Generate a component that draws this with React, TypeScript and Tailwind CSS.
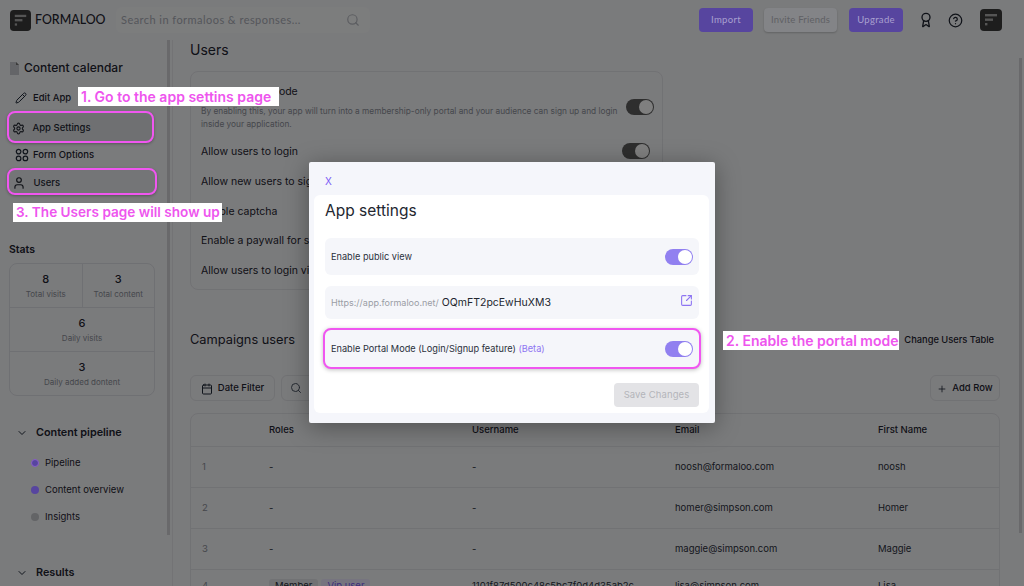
import React from "react";
import { Award, Calendar, ChevronDown, CircleHelp, Pencil, Plus, Search, Settings, SquareArrowOutUpRight, User } from "lucide-react";

function Logo({ size }: { size: number }) {
  return (
    <svg width={size} height={size} viewBox="0 0 22 22" className="shrink-0">
      <rect width="22" height="22" rx="4" fill="#3a3a3a" />
      <rect x="5" y="5" width="12" height="2.4" fill="#aaa" />
      <rect x="5" y="9.5" width="8" height="2.4" fill="#aaa" />
      <rect x="5" y="14" width="2.4" height="2.4" fill="#aaa" />
    </svg>
  );
}

function Toggle({ dark, className = "" }: { dark?: boolean; className?: string }) {
  return (
    <div className={`w-[28px] h-[16px] rounded-full flex items-center justify-end pr-[1px] shrink-0 ${dark ? "bg-[#5c5c5c]" : "bg-[#9180f0]"} ${className}`}>
      <div className="w-[14px] h-[14px] rounded-full bg-white" />
    </div>
  );
}

function FourDots() {
  return (
    <svg width="14" height="14" viewBox="0 0 14 14" fill="none" stroke="#1f2937" strokeWidth="1.2">
      <circle cx="3.6" cy="3.6" r="2.3" />
      <circle cx="10.4" cy="3.6" r="2.3" />
      <circle cx="3.6" cy="10.4" r="2.3" />
      <circle cx="10.4" cy="10.4" r="2.3" />
    </svg>
  );
}

function Stat({ value, label, right, grow }: { value: string; label: string; right?: boolean; grow?: boolean }) {
  return (
    <div className={`h-[43px] flex flex-col items-center justify-center gap-[3px] ${grow ? "flex-1" : ""} ${right ? "border-l border-[#dfe1e6]" : ""}`}>
      <div className="text-[11px] font-medium leading-[14px] text-[#1f2430]">{value}</div>
      <div className="text-[8px] leading-[10px] text-[#8b8f98]">{label}</div>
    </div>
  );
}

function SettingRow({ label, top, toggle, dark }: { label: string; top: string; toggle?: boolean; dark?: boolean }) {
  return (
    <div className={`flex items-center justify-between h-[16px] pr-[12px] ${top}`}>
      <span className="text-[10.5px] leading-[14px] pt-[2px] text-[#1f2430]">{label}</span>
      {toggle ? <Toggle dark={dark} /> : null}
    </div>
  );
}

const rows = [
  ["1", "-", "-", "noosh@formaloo.com", "noosh"],
  ["2", "-", "-", "homer@simpson.com", "Homer"],
  ["3", "-", "-", "maggie@simpson.com", "Maggie"],
];

function Sidebar() {
  const item = "text-[9.5px] font-medium text-[#1f2430]";
  return (
    <aside className="w-[173px] shrink-0 border-r border-[#e6e7eb] pl-[9px] pt-[21px] h-[546px] overflow-hidden">
      <div className="flex items-center gap-[4px] h-[14px]">
        <svg width="11" height="13" viewBox="0 0 11 13"><path d="M1 0h6l3 3v10H1z" fill="#c9cbd0" /><path d="M7 0l3 3H7z" fill="#777" /></svg>
        <span className="text-[12px] font-medium text-[#1f2430] leading-[14px]">Content calendar</span>
      </div>
      <div className="flex items-center pl-[6px] h-[20px] mt-[13px] w-[80px]">
        <span className="w-[18px]"><Pencil size={12} color="#1f2937" /></span>
        <span className={item}>Edit App</span>
      </div>
      <div className="relative z-10 flex items-center pl-[3px] pt-[2px] -ml-[2px] h-[32px] mt-[3px] w-[147px] rounded-[8px] border-[2.5px] border-[#f056f0] bg-[#6f7072] shadow-[0_1px_3px_rgba(0,0,0,0.3)]">
        <span className="w-[20.5px]"><Settings size={13} color="#111318" /></span>
        <span className="text-[9.5px] font-medium text-[#101218]">App Settings</span>
      </div>
      <div className="flex items-center pl-[6px] h-[20px] mt-[2px]">
        <span className="w-[18px]"><FourDots /></span>
        <span className={item}>Form Options</span>
      </div>
      <div className="relative z-10 flex items-center pl-[3px] -ml-[2px] pt-[3px] h-[27px] mt-[3px] w-[150px] rounded-[8px] border-[2.5px] border-[#f056f0] bg-[#747577] shadow-[0_1px_3px_rgba(0,0,0,0.3)]">
        <span className="w-[21.5px]"><User size={14} color="#111318" /></span>
        <span className="text-[9.5px] font-medium text-[#101218]">Users</span>
      </div>
      <div className="text-[10.5px] font-semibold text-[#1f2430] leading-[14px] mt-[48px]">Stats</div>
      <div className="w-[146px] mt-[6px] rounded-[8px] border border-[#dfe1e6]">
        <div className="flex border-b border-[#dfe1e6]">
          <Stat value="8" label="Total visits" grow />
          <Stat value="3" label="Total content" right grow />
        </div>
        <div className="border-b border-[#dfe1e6]"><Stat value="6" label="Daily visits" /></div>
        <Stat value="3" label="Daily added dontent" />
      </div>
      <div className="flex items-center gap-[8px] pl-[7px] mt-[30px] h-[14px]">
        <ChevronDown size={12} color="#1f2937" />
        <span className="text-[10.8px] font-semibold text-[#1f2430]">Content pipeline</span>
      </div>
      <div className="flex flex-col gap-[13px] pl-[22px] mt-[16px]">
        <div className="flex items-center gap-[6px] h-[14px]">
          <span className="relative z-10 w-[8px] h-[8px] rounded-full bg-[#57459f] border border-[#8a5fc8]" />
          <span className="text-[9.5px] text-[#1f2430]">Pipeline</span>
        </div>
        <div className="flex items-center gap-[6px] h-[14px]">
          <span className="relative z-10 w-[8px] h-[8px] rounded-full bg-[#57459f]" />
          <span className="text-[9.5px] text-[#1f2430]">Content overview</span>
        </div>
        <div className="flex items-center gap-[6px] h-[14px]">
          <span className="relative z-10 w-[8px] h-[8px] rounded-full bg-[#636466]" />
          <span className="text-[9.5px] text-[#1f2430]">Insights</span>
        </div>
      </div>
      <div className="flex items-center gap-[8px] pl-[7px] mt-[42px] h-[14px]">
        <ChevronDown size={12} color="#1f2937" />
        <span className="text-[10.8px] font-semibold text-[#1f2430]">Results</span>
      </div>
    </aside>
  );
}

function Main() {
  return (
    <main className="flex-1 pl-[17px] pr-[24px] overflow-hidden h-[546px]">
      <h2 className="text-[14px] leading-[18px] text-[#1f2430] mt-[1px]">Users</h2>
      <section className="w-[473px] h-[219px] mt-[12px] rounded-[8px] border border-[#e3e4e8] pl-[10px]">
        <div className="flex justify-between pr-[12px]">
          <div>
            <div className="text-[10.5px] leading-[14px] text-[#1f2430] mt-[13px]">Enable Portal Mode</div>
            <div className="text-[8.3px] leading-[13px] text-[#8b8f98] w-[425px] mt-[6px]">
              By enabling this, your app will turn into a membership-only portal and your audience can sign up and login inside your application.
            </div>
          </div>
          <Toggle dark className="mt-[27px]" />
        </div>
        <SettingRow label="Allow users to login" top="mt-[12px]" toggle dark />
        <SettingRow label="Allow new users to sign up" top="mt-[14px]" />
        <SettingRow label="Enable captcha" top="mt-[14px]" />
        <SettingRow label="Enable a paywall for signup" top="mt-[13px]" />
        <SettingRow label="Allow users to login via link" top="mt-[14px]" />
      </section>
      <div className="flex items-center justify-between mt-[41px] h-[18px] pr-[6px]">
        <h2 className="text-[12.8px] leading-[18px] text-[#1f2430]">Campaigns users</h2>
        <span className="text-[9.3px] font-medium text-[#1f2430]">Change Users Table</span>
      </div>
      <div className="flex items-center gap-[6px] mt-[26px]">
        <div className="w-[85px] h-[26px] pt-[1px] rounded-[6px] border border-[#e3e4e8] flex items-center justify-center gap-[5px]">
          <Calendar size={12} color="#1f2937" />
          <span className="text-[9.5px] font-medium text-[#1f2430]">Date Filter</span>
        </div>
        <div className="w-[120px] h-[26px] rounded-[6px] border border-[#e3e4e8] flex items-center pl-[8px]">
          <Search size={12} color="#4b5563" />
        </div>
        <div className="ml-auto w-[70px] h-[26px] pt-[1px] rounded-[6px] border border-[#e3e4e8] flex items-center justify-center gap-[5px]">
          <Plus size={10} color="#1f2937" />
          <span className="text-[9.5px] font-medium text-[#1f2430]">Add Row</span>
        </div>
      </div>
      <div className="mt-[12px] rounded-t-[8px] border border-[#e3e4e8] w-[810px]">
        <div className="grid grid-cols-[78px_203px_203px_203px_1fr] items-center h-[33px] border-b border-[#e3e4e8] text-[9.5px] font-medium text-[#1f2430]">
          <span /><span>Roles</span><span>Username</span><span>Email</span><span>First Name</span>
        </div>
        {rows.map((r) => (
          <div key={r[0]} className="grid grid-cols-[78px_203px_203px_203px_1fr] items-center h-[41px] border-b border-[#e3e4e8] text-[9.5px] text-[#2b303b]">
            <span className="pl-[11px] text-[#8b8f98]">{r[0]}</span>
            <span>{r[1]}</span><span>{r[2]}</span><span>{r[3]}</span><span>{r[4]}</span>
          </div>
        ))}
        <div className="grid grid-cols-[78px_203px_203px_203px_1fr] items-start h-[41px] pt-[9px] text-[9.5px] text-[#2b303b]">
          <span className="pl-[11px] text-[#8b8f98]">4</span>
          <span className="flex gap-[3px]">
            <span className="px-[6px] rounded-[3px] bg-[#e3e4e8]">Member</span>
            <span className="px-[6px] rounded-[3px] bg-[#ece8ff] text-[#7c5cf5]">Vip user</span>
          </span>
          <span>1101f87d500c48c5bc7f0d4d35ab2c</span><span>lisa@simpson.com</span><span>Lisa</span>
        </div>
      </div>
    </main>
  );
}

function Header() {
  const face = { fontFamily: "Lato, sans-serif" };
  return (
    <header className="h-[40px] flex items-center pl-[10px] pr-[22px]">
      <Logo size={21} />
      <span className="ml-[4px] text-[12.4px] font-medium text-[#1f2430] w-[81px]" style={face}>FORMALOO</span>
      <div className="w-[254px] h-[26px] rounded-[6px] bg-[#f9fafb] flex items-center justify-between pl-[5px] pr-[10px]">
        <span className="text-[11px] tracking-[0.45px] text-[#a9adb6]" style={face}>Search in formaloos &amp; responses...</span>
        <Search size={14} color="#b7bac1" />
      </div>
      <button className="relative z-10 ml-auto w-[54px] h-[24px] rounded-[4px] bg-[#57459f] text-[#a9a0cf] text-[9.5px] tracking-[0.3px]" style={face}>Import</button>
      <button className="relative z-10 ml-[11px] w-[73px] h-[24px] rounded-[4px] bg-[#838487] shadow-[0_1px_2px_rgba(0,0,0,0.2)] text-[#5f6064] text-[9.5px] tracking-[0.2px]" style={face}>Invite Friends</button>
      <button className="relative z-10 ml-[12px] w-[54px] h-[24px] rounded-[4px] bg-[#57459f] text-[#a9a0cf] text-[9.5px] tracking-[0.3px]" style={face}>Upgrade</button>
      <Award size={16} color="#1f2430" className="ml-[15px]" />
      <CircleHelp size={15} color="#1f2430" className="ml-[14px]" />
      <div className="ml-[17px]"><Logo size={22} /></div>
    </header>
  );
}

function Callout({ text, className }: { text: string; className: string }) {
  return (
    <div className={`absolute bg-white text-[#ee55ee] font-semibold leading-[19px] px-[3px] whitespace-nowrap ${className}`}>
      {text}
    </div>
  );
}

function Modal() {
  return (
    <div className="absolute left-[309px] top-[162px] w-[406px] h-[261px] bg-[#f5f6fb] rounded-[2px] shadow-[0_4px_24px_rgba(0,0,0,0.35)] pt-[6px] pb-[10px] pl-[5px] pr-[6px] flex flex-col">
      <div className="h-[27px] pl-[11px] pt-[7px] text-[10px] leading-[12px] text-[#7c5cf5]">X</div>
      <div className="flex-1 bg-white rounded-[6px] pl-[11px] pr-[10px] flex flex-col">
        <h3 className="text-[15.5px] leading-[20px] text-[#23262f] mt-[6px]">App settings</h3>
        <div className="mt-[17px] h-[37px] rounded-[6px] bg-[#f5f6fa] flex items-center justify-between pl-[6px] pr-[6px]">
          <span className="text-[9.2px] text-[#2b303b] mt-[1px]">Enable public view</span>
          <Toggle />
        </div>
        <div className="mt-[11px] h-[33px] rounded-[6px] bg-[#f5f6fa] flex items-center justify-between pl-[6px] pr-[6px]">
          <span className="flex items-center gap-[3px]">
            <span className="text-[9px] text-[#9a9da5]">Https://app.formaloo.net/</span>
            <span className="text-[10.5px] text-[#23262f]">OQmFT2pcEwHuXM3</span>
          </span>
          <SquareArrowOutUpRight size={13} color="#8d74f2" className="mb-[5px]" />
        </div>
        <div className="mt-[9px] -mx-[2px] h-[41px] rounded-[8px] border-[2.5px] border-[#f056f0] bg-[#f5f6fa] shadow-[0_1px_4px_rgba(0,0,0,0.25)] flex items-center justify-between pl-[6px] pr-[6px]">
          <span className="text-[9.2px] text-[#2b303b]">
            Enable Portal Mode (Login/Signup feature) <span className="text-[#8d74f2]">(Beta)</span>
          </span>
          <Toggle />
        </div>
        <div className="mt-[14px] self-end w-[85px] h-[24px] rounded-[4px] bg-[#e3e3e6] flex items-center justify-center text-[9.5px] tracking-[0.1px] text-[#b4b5ba]">
          Save Changes
        </div>
      </div>
    </div>
  );
}

export default function App() {
  return (
    <div className="relative w-[1024px] h-[586px] overflow-hidden bg-[#f5f6f9]" style={{ fontFamily: "Inter, sans-serif" }}>
      <Header />
      <div className="flex">
        <Sidebar />
        <Main />
      </div>
      <div className="absolute left-[167px] top-[40px] w-[3px] h-[495px] bg-[#d2d3d6]" />
      <div className="absolute left-[1019px] top-[58px] w-[3px] h-[475px] bg-[#d2d3d6]" />
      <div className="absolute inset-0 bg-black/50" />
      <Modal />
      <Callout text="1. Go to the app settins page" className="left-[78px] top-[87px] w-[201px] text-[14px]" />
      <Callout text="3. The Users page will show up" className="left-[13px] top-[203px] w-[209px] text-[13.6px]" />
      <Callout text="2. Enable the portal mode" className="left-[723px] top-[331px] w-[176px] text-[14px]" />
    </div>
  );
}
